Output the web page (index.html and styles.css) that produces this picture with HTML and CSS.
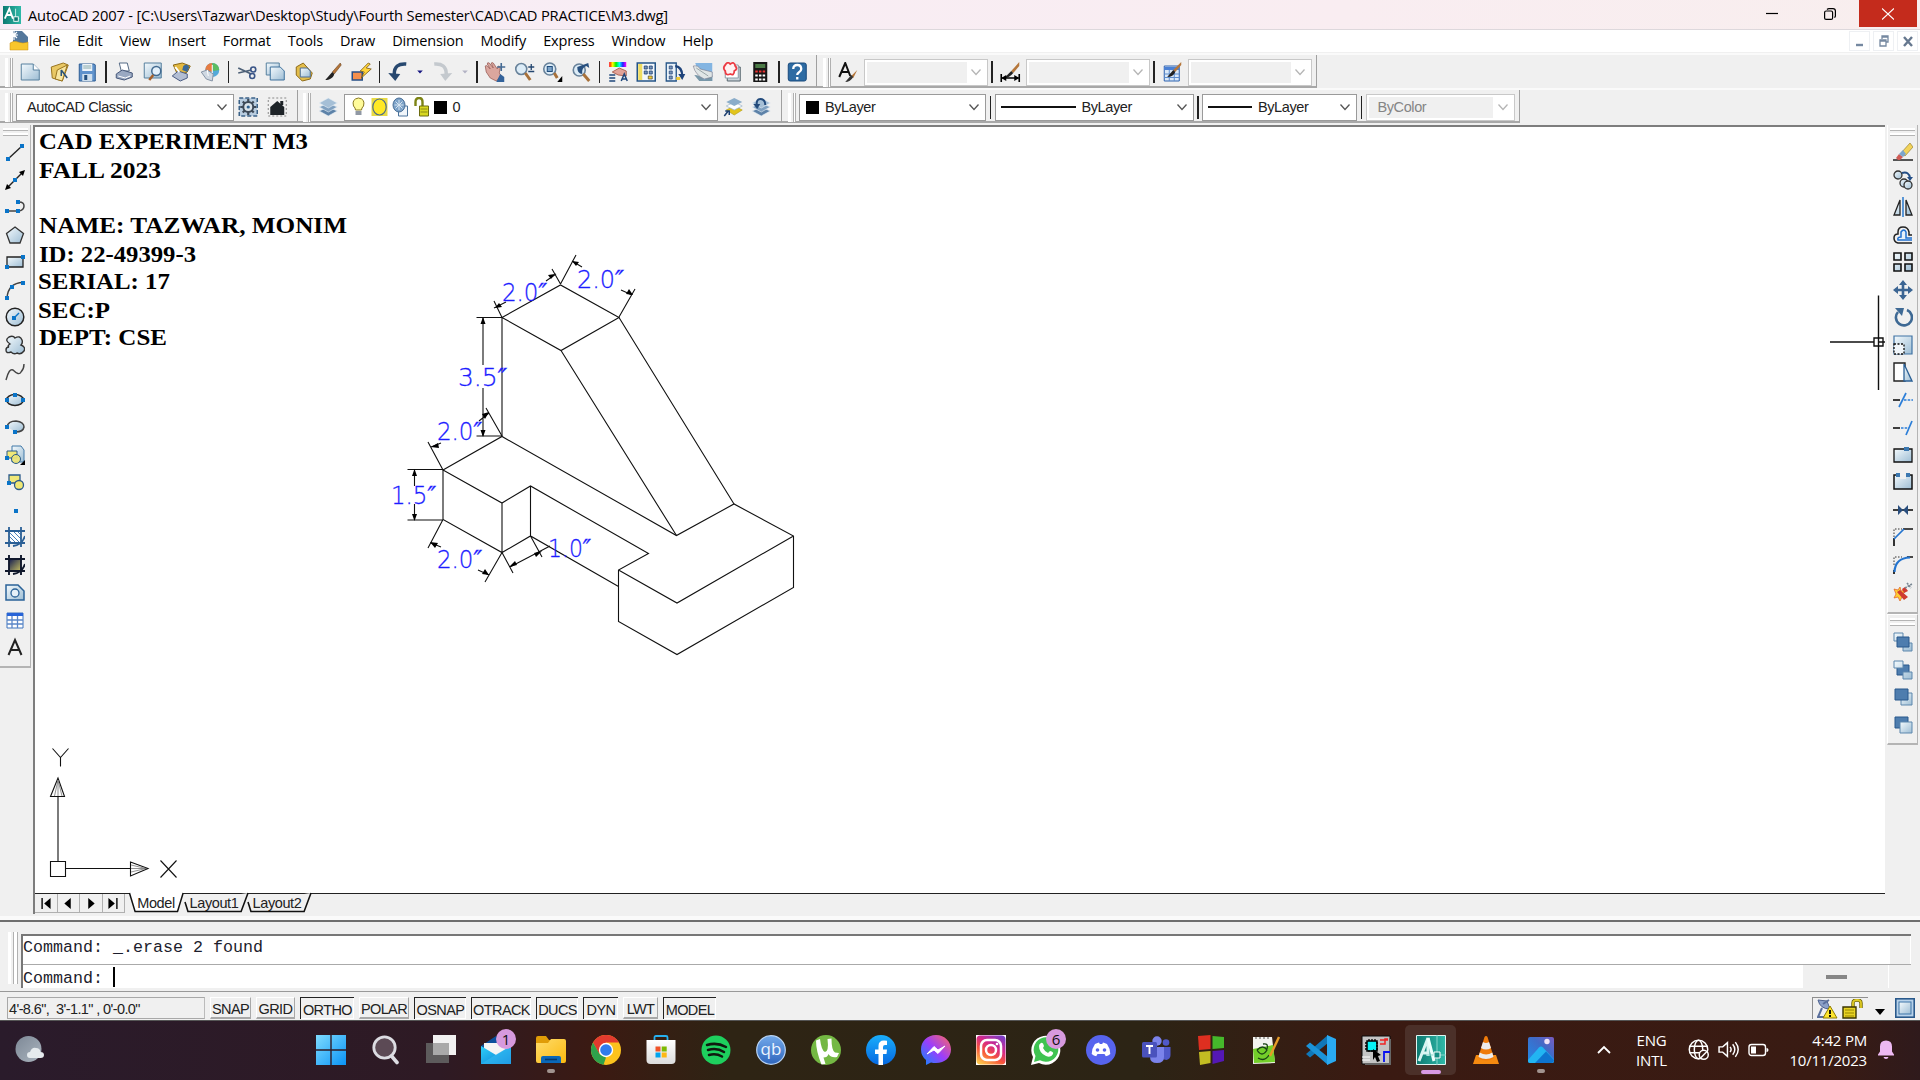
FILE: index.html
```html
<!DOCTYPE html>
<html lang="en">
<head>
<meta charset="utf-8">
<title>AutoCAD 2007 - M3.dwg</title>
<link rel="stylesheet" href="styles.css">
</head>
<body>
<svg class="defs" width="0" height="0">
  <defs>
    <linearGradient id="paper" x1="0" y1="0" x2="1" y2="1"><stop offset="0" stop-color="#f4fafd"/><stop offset="1" stop-color="#9dbdd4"/></linearGradient>
    <linearGradient id="moon" x1="0" y1="0" x2="1" y2="1"><stop offset="0" stop-color="#7d8896"/><stop offset="1" stop-color="#aab4be"/></linearGradient>
    <linearGradient id="rainbow"><stop offset="0" stop-color="#f00"/><stop offset=".2" stop-color="#ff0"/><stop offset=".4" stop-color="#0e0"/><stop offset=".6" stop-color="#0ff"/><stop offset=".8" stop-color="#22f"/><stop offset="1" stop-color="#f0f"/></linearGradient>
    <linearGradient id="dusk" x1="0" y1="0" x2="1" y2="1"><stop offset="0" stop-color="#111a50"/><stop offset="1" stop-color="#c8c060"/></linearGradient>
    <linearGradient id="win" x1="0" y1="0" x2="1" y2="1"><stop offset="0" stop-color="#7fdcff"/><stop offset="1" stop-color="#0a93f5"/></linearGradient>
    <linearGradient id="folder" x1="0" y1="0" x2="1" y2="1"><stop offset="0" stop-color="#ffdc6b"/><stop offset="1" stop-color="#fbb90f"/></linearGradient>
    <linearGradient id="fb" x1="0" y1="0" x2="0" y2="1"><stop offset="0" stop-color="#1aaefb"/><stop offset="1" stop-color="#0568e1"/></linearGradient>
    <linearGradient id="msg" x1="0" y1="1" x2="1" y2="0"><stop offset="0" stop-color="#0a8cff"/><stop offset=".5" stop-color="#9c3dfb"/><stop offset="1" stop-color="#ff6a60"/></linearGradient>
    <linearGradient id="insta" x1=".2" y1="1" x2=".8" y2="0"><stop offset="0" stop-color="#fdc54c"/><stop offset=".35" stop-color="#f7553a"/><stop offset=".65" stop-color="#d3288c"/><stop offset="1" stop-color="#7d3cc4"/></linearGradient>
    <linearGradient id="mail" x1="0" y1="0" x2="1" y2="1"><stop offset="0" stop-color="#2fd0f8"/><stop offset="1" stop-color="#0a7bd6"/></linearGradient>
    <linearGradient id="photo" x1="0" y1="1" x2="1" y2="0"><stop offset="0" stop-color="#1f8be8"/><stop offset=".6" stop-color="#3f6bc8"/><stop offset="1" stop-color="#7a5cc0"/></linearGradient>
    <linearGradient id="teal" x1="0" y1="0" x2="1" y2="0"><stop offset="0" stop-color="#0d7a72"/><stop offset="1" stop-color="#2fb9a8"/></linearGradient>
    <linearGradient id="qb" x1="0" y1="0" x2="0" y2="1"><stop offset="0" stop-color="#72a9ea"/><stop offset="1" stop-color="#2f66bd"/></linearGradient>
    <linearGradient id="store" x1="0" y1="0" x2="0" y2="1"><stop offset="0" stop-color="#fff"/><stop offset="1" stop-color="#dcdcdc"/></linearGradient>
    <symbol id="chev" viewBox="0 0 12 12"><path d="M1.500 3.500 6 8.500l4.500-5" fill="none" stroke="currentColor" stroke-width="1.300"/></symbol>
    <symbol id="brush" viewBox="0 0 20 20"><path d="M18 1 10 10l2 2 7-9z" fill="#b5763a" stroke="#5a3210" stroke-width=".5"/><path d="M10 10 3 18c4 0 8-2 9-6z" fill="#222"/></symbol>
    <symbol id="layers" viewBox="0 0 20 20"><path d="M10 10 19 14l-9 5-9-5z" fill="#5d82a8" stroke="#e8f0f6" stroke-width=".6"/><path d="m10 6 9 4-9 5-9-5z" fill="#7fa0c0" stroke="#e8f0f6" stroke-width=".6"/><path d="m10 1 9 5-9 5-9-5z" fill="#a5bfd6" stroke="#e8f0f6" stroke-width=".6"/></symbol>
  </defs>
</svg>

<header class="titlebar">
  <svg class="app-icon" viewBox="0 0 20 20"><rect width="20" height="20" fill="url(#teal)"/><path d="M2 14 7 3l4 11M4 10h5" fill="none" stroke="#fff" stroke-width="2"/><path d="M11 14h7M14 3v14" stroke="#d5f3ee"/><rect x="12" y="12" width="5" height="5" fill="#0d7a72" stroke="#fff"/></svg>
  <span class="title-text">AutoCAD 2007 - [C:\Users\Tazwar\Desktop\Study\Fourth Semester\CAD\CAD PRACTICE\M3.dwg]</span>
  <div class="window-buttons">
    <span class="wbtn"><svg width="12" height="12" viewBox="0 0 12 12"><path d="M0 5.500h12" stroke="#000" stroke-width="1.200"/></svg></span>
    <span class="wbtn"><svg width="12" height="12" viewBox="0 0 12 12" fill="none" stroke="#000" stroke-width="1.200"><rect x=".6" y="3" width="8" height="8.400" rx="1.500"/><path d="M3 1.500Q4 .6 5 .6h4q2.400 0 2.400 2.400v5q0 1-1 1.600"/></svg></span>
    <span class="wbtn close"><svg width="12" height="12" viewBox="0 0 12 12"><path d="m0 .5 12 11M12 .5 0 11.500" stroke="#fff" stroke-width="1.100"/></svg></span>
  </div>
</header>

<nav class="menubar">
  <svg class="doc-icon" viewBox="0 0 20 20"><path d="M4 0h9l6 6v6H4z" fill="#54789c"/><path d="M5 0v9M1 4h8M2 1l6 6M8 1 2 7" stroke="#fff" stroke-width="1.100"/><path d="M1 12q4-3 8-1 5 2 10 0v8H1z" fill="#f8c62c" stroke="#c88f10" stroke-width=".5"/></svg>
  <span>File</span><span>Edit</span><span>View</span><span>Insert</span><span>Format</span><span>Tools</span><span>Draw</span><span>Dimension</span><span>Modify</span><span>Express</span><span>Window</span><span>Help</span>
  <div class="doc-buttons">
    <b><svg width="10" height="12" viewBox="0 0 10 12"><path d="M1 10h7" stroke="#7588a0" stroke-width="2.400"/></svg></b>
    <b><svg width="10" height="12" viewBox="0 0 10 12" fill="none" stroke="#7588a0" stroke-width="1.300"><path d="M3 4V1h6v6H7M3 2h6"/><path d="M1 5h6v6H1zM1 6h6"/></svg></b>
    <b><svg width="10" height="12" viewBox="0 0 10 12"><path d="m1 2 8 9M9 2l-8 9" stroke="#66788f" stroke-width="2.400"/></svg></b>
  </div>
</nav>

<section class="toolrow first">
  <div class="toolbar tb-standard">
    <i class="grip"></i>
    <svg class="ic" viewBox="0 0 20 20"><path d="M1 2h12l6 6v10H1z" fill="url(#paper)" stroke="#57809f"/><path d="M13 2v6h6" fill="#fff" stroke="#57809f"/></svg>
    <svg class="ic" viewBox="0 0 20 20"><path d="M2 5 14 1l5 2-6 16-10-3z" fill="#e9c864" stroke="#997520"/><path d="m6 17 2-9 10-5-5 16z" fill="#f8e6a0" stroke="#997520"/><path d="m12 8 6 8M12 8v6" stroke="#27527c" stroke-width="1.500"/></svg>
    <svg class="ic" viewBox="0 0 20 20"><path d="M2 2h15l1 1v16H2z" fill="#5f92cc" stroke="#2c5c94"/><path d="M5 2h10v7H5z" fill="#eef4fa"/><path d="M6 4h8M6 6h8" stroke="#8aa"/><path d="M5 12h10v7H5z" fill="#cfdfed"/><path d="M7 13h3v5H7z" fill="#24507f"/></svg>
    <i class="sep"></i>
    <svg class="ic" viewBox="0 0 20 20"><path d="M5 1h8l2 8H7z" fill="#fff" stroke="#556a85"/><path d="m2 12 6-4 10 3v4l-8 3-8-2z" fill="#9aa9c2" stroke="#47587a"/><path d="m4 14 7 2 5-2" stroke="#fff" fill="none"/></svg>
    <svg class="ic" viewBox="0 0 20 20"><path d="M1 1h17v15H1z" fill="url(#paper)" stroke="#57809f"/><circle cx="13" cy="9" r="4.500" fill="#e4f1fb" stroke="#426a90" stroke-width="1.500"/><path d="m10 13-4 5" stroke="#a5602c" stroke-width="2.500"/></svg>
    <svg class="ic" viewBox="0 0 20 20"><path d="m2 3 9-2 8 3-3 6-9 4z" fill="#e3b941" stroke="#8c6914"/><path d="M12 4q4-3 6 1l-2 5-5-2z" fill="#386899"/><path d="m1 14 6-5 9 3v4l-7 3z" fill="#b3bed3" stroke="#4b5c82"/><path d="m4 5 4 5" stroke="#fff" stroke-width="2"/></svg>
    <svg class="ic" viewBox="0 0 20 20"><circle cx="12" cy="8" r="7" fill="#54a9d9"/><path d="M12 1a7 7 0 0 0-7 7l7 2z" fill="#e77c41"/><path d="M12 1a7 7 0 0 1 7 7l-6 1z" fill="#5bbd62"/><path d="m1 10 6-2 6 4-1 7-6-2z" fill="#cfd8e2" stroke="#8694a6"/><path d="m7 8 1 6M12 3v8" stroke="#fff"/></svg>
    <i class="sep"></i>
    <svg class="ic" viewBox="0 0 20 20"><path d="m1 6 13 6M1 11l13-3" stroke="#4d6077" stroke-width="1.700"/><circle cx="16" cy="7.500" r="2.500" fill="none" stroke="#3b5688" stroke-width="1.600"/><circle cx="15" cy="14" r="2.500" fill="none" stroke="#3b5688" stroke-width="1.600"/></svg>
    <svg class="ic" viewBox="0 0 20 20"><path d="M1 1h13v12H1z" fill="url(#paper)" stroke="#57809f"/><path d="M5 5h10l4 4v9H5z" fill="url(#paper)" stroke="#3e719c"/></svg>
    <svg class="ic" viewBox="0 0 20 20"><path d="m2 5 7-4 9 10-2 6-8 2-6-6z" fill="#e3bd4a" stroke="#8e6b18"/><path d="M6 6h7l3 3v6H6z" fill="url(#paper)" stroke="#4a6d98"/></svg>
    <svg class="ic" viewBox="0 0 20 20"><use href="#brush"/></svg>
    <svg class="ic" viewBox="0 0 20 20"><rect x="1" y="10" width="10" height="8" fill="#f48f4d" stroke="#264f87" stroke-width="1.500"/><path d="m17 1-8 8 4 1-3 6 10-9-5-1 4-4z" fill="#ffd43a" stroke="#775712" stroke-width=".8"/></svg>
    <i class="sep"></i>
    <svg class="ic" viewBox="0 0 20 20"><path d="M18 2Q6 1 6 12" fill="none" stroke="#27486f" stroke-width="3.500"/><path d="m0 11 12 1-5 7z" fill="#27486f"/></svg>
    <svg class="ic drop" viewBox="0 0 10 20"><path d="M1 8h8l-4 4z" fill="#141480"/></svg>
    <svg class="ic" viewBox="0 0 20 20"><path d="M2 2q12-1 12 10" fill="none" stroke="#c4c9ce" stroke-width="3.500"/><path d="m20 11-12 1 5 7z" fill="#c4c9ce"/></svg>
    <svg class="ic drop" viewBox="0 0 10 20"><path d="M1 8h8l-4 4z" fill="#b2b2c4"/></svg>
    <i class="sep"></i>
    <svg class="ic" viewBox="0 0 20 20"><path d="M0 4q1-1 2 0l3 3-3-5q0-2 2-1l4 5-2-5q1-1 2 0l4 6 1-3q2 0 2 2l-1 5 2 3-5 5-6-3-4-6z" fill="#dba69e" stroke="#9a5e58" stroke-width=".8"/><path d="m15 12 4 3v5h-8z" fill="#33639b"/><path d="M12 5h8M16 1v8" stroke="#456b94" stroke-width="1.600"/></svg>
    <svg class="ic" viewBox="0 0 20 20"><circle cx="7" cy="7" r="5.500" fill="#dcecf7" stroke="#68829a" stroke-width="1.600"/><path d="m11 11 5 7" stroke="#a8713a" stroke-width="3"/><path d="M14 5h6M17 2v6M14 9.500h6" stroke="#23466f" stroke-width="1.300"/></svg>
    <svg class="ic" viewBox="0 0 20 20"><circle cx="7.500" cy="7" r="6" fill="#dcecf7" stroke="#68829a" stroke-width="1.600"/><rect x="5" y="4.500" width="5" height="5" fill="#7ba3c8" stroke="#214d7d"/><path d="m12 11 3 5" stroke="#a8713a" stroke-width="3"/><path d="M20 14v6h-5z"/></svg>
    <svg class="ic" viewBox="0 0 20 20"><circle cx="8" cy="8" r="6" fill="#dcecf7" stroke="#68829a" stroke-width="1.600"/><path d="m12 12 6 7" stroke="#a8713a" stroke-width="3"/><path d="m6 5 11-4 1 5-3-2q-5 2-4 8Q6 12 6 5z" fill="#28507f"/></svg>
    <i class="sep"></i>
    <svg class="ic" viewBox="0 0 20 20"><path d="M1 0h17v5H1z" fill="url(#rainbow)"/><path d="m4 10 7-4 7 3v5l-8-1z" fill="#e2a398" stroke="#9a4e3e" stroke-width=".8"/><path d="M1 13h6M1 16h6M1 19h6M13 19l3-7 3 7M14 17h4" stroke="#1f477b" stroke-width="1.500" fill="none"/></svg>
    <svg class="ic" viewBox="0 0 20 20"><path d="M1 1h18v18H1z" fill="#f4f8fc" stroke="#245487" stroke-width="1.500"/><path d="M2 2h4v16H2z" fill="#f0dd61"/><path d="M8 4h3v3H8zM13 4h3v3h-3zM8 9h3v3H8zM13 9h3v3h-3z" fill="#7896bb" stroke="#1f3f72" stroke-width=".8"/><path d="M12 14h4v3h-4z" fill="#f2cb32" stroke="#333" stroke-width=".6"/></svg>
    <svg class="ic" viewBox="0 0 20 20"><path d="M1 1h10v18H1z" fill="#e8f1f8" stroke="#245487" stroke-width="1.300"/><path d="M4 4h3v3H4zM4 9h3v3H4zM4 14h3v3H4z" fill="#7896bb" stroke="#1f3f72" stroke-width=".7"/><path d="M10 4q7 1 7 10" fill="none" stroke="#1d437a" stroke-width="2.400"/><path d="M13 12h7l-3 6z" fill="#1d437a"/><path d="M11 15h4v3h-4z" fill="#f2cb32"/></svg>
    <svg class="ic" viewBox="0 0 20 20"><path d="M2 1h17v18H8z" fill="#83b5e2"/><path d="M1 13q6 0 10 5l8-5v6H6z" fill="#7897a8"/><path d="M0 4q5-1 7 3l12 3v5l-8 2Q2 13 0 4z" fill="#e0e6e6" stroke="#778" stroke-width=".6"/><path d="m3 6 12 8" stroke="#9aa6a8"/></svg>
    <svg class="ic" viewBox="0 0 20 20"><path d="M5 5h13v14H5z" fill="#cad4da" stroke="#57656e"/><path d="M3 3h13v13H3z" fill="#fff" stroke="#8b9ba5"/><path d="M3 3q2-4 5-1 4-3 5 2 3 3-1 5 0 5-4 3-5 2-5-3-3-3 0-6z" fill="#fff2f2" stroke="#ec3b43" stroke-width="1.800"/></svg>
    <svg class="ic" viewBox="0 0 20 20"><path d="M3 0h14v20H3z" fill="#171717"/><path d="M5 2h10v4H5z" fill="#4b7a46"/><path d="M5 9.500h10" stroke="#e33" stroke-width="2" stroke-dasharray="2.500 1.200"/><path d="M5 13.500h10M5 17.500h10" stroke="#fff" stroke-width="2" stroke-dasharray="2.500 1.200"/></svg>
    <i class="sep"></i>
    <svg class="ic" viewBox="0 0 20 20"><rect x="1" y="1" width="18" height="18" rx="2" fill="#2d6ba3" stroke="#194a7d"/><path d="M6 7q0-4 4-4t4 4q0 2-2.500 3.500Q10 11.500 10 13M10 15v2.500" fill="none" stroke="#fff" stroke-width="2.300"/></svg>
  </div>
  <div class="toolbar tb-styles">
    <i class="grip"></i>
    <svg class="ic" viewBox="0 0 20 20"><path d="M1 15 7 1l5 13M3 10h7" fill="none" stroke="#111" stroke-width="2"/><path d="m19 8-6 6 2 2z" fill="#b5763a"/><path d="m13 13 2 2q-3 5-8 5z" fill="#333"/></svg>
    <span class="combo off w124"><em></em><svg><use href="#chev"/></svg></span>
    <i class="sep"></i>
    <svg class="ic" viewBox="0 0 20 20"><path d="m19 0-8 9 2 2 6-7z" fill="#b5763a"/><path d="m11 9 2 2q-4 5-9 5z" fill="#222"/><path d="M1 12v8M19 12v8M2 16h16" stroke="#000" stroke-width="1.600"/><path d="m1 16 5-3v6zM19 16l-5-3v6z"/></svg>
    <span class="combo off w124"><em></em><svg><use href="#chev"/></svg></span>
    <i class="sep"></i>
    <svg class="ic" viewBox="0 0 20 20"><path d="M2 4h15v15H2z" fill="#dbe9f8" stroke="#2c62b0"/><path d="M2 5h15v3H2z" fill="#4a80d4"/><path d="M2 12h15M2 15.500h15M7 8v11M12 8v11" stroke="#5d8ccc"/><path d="m19 0-8 8 2 2 6-7z" fill="#b5763a"/><path d="m11 8 2 2q-2 5-8 5z" fill="#222"/></svg>
    <span class="combo off w124"><em></em><svg><use href="#chev"/></svg></span>
  </div>
</section>

<section class="toolrow">
  <div class="toolbar tb-workspace">
    <i class="grip"></i>
    <span class="combo w218">AutoCAD Classic<svg><use href="#chev"/></svg></span>
    <svg class="ic" viewBox="0 0 20 20"><path d="M1 1h18v18H1z" fill="#b9cde0" stroke="#3b6288" stroke-width="1.500" stroke-dasharray="4 2"/><circle cx="10" cy="10" r="5" fill="#dce4ea" stroke="#3e4a58" stroke-width="2"/><path d="M10 2v3M10 15v3M2 10h3M15 10h3M4.500 4.500l2 2M13.500 13.500l2 2M15.500 4.500l-2 2M6.500 13.500l-2 2" stroke="#3e4a58" stroke-width="2.200"/><circle cx="10" cy="10" r="1.600" fill="#2e6090"/></svg>
    <svg class="ic" viewBox="0 0 20 20"><path d="M1 1h18v18H1z" fill="none" stroke="#888" stroke-dasharray="2 2"/><path d="M10 4 3 10v8h14v-8z" fill="#1e2428"/><path d="M13 4h3v4h-3z" fill="#1e2428"/></svg>
  </div>
  <div class="toolbar tb-layers">
    <i class="grip"></i>
    <svg class="ic" viewBox="0 0 20 20"><use href="#layers"/></svg>
    <span class="combo layer-combo">
      <svg class="li" viewBox="0 0 16 20"><path d="M5 13q0-2-2-4Q1 2 8 1q7 1 5 8-2 2-2 4z" fill="#fffb9a" stroke="#8a7a20"/><path d="M5 14h6v4H5z" fill="#9098a4"/></svg>
      <svg class="li" viewBox="0 0 16 20"><path d="M0 1h16v18H0z" fill="#e8da45"/><ellipse cx="8" cy="10" rx="6.700" ry="8" fill="#ffe925" stroke="#4c6c8c" stroke-width="1.200"/></svg>
      <svg class="li" viewBox="0 0 16 20"><path d="M6 9h9v10H6z" fill="#f1f6fb" stroke="#4b739b"/><ellipse cx="6.500" cy="8" rx="6" ry="7" fill="#7ba1c7" stroke="#4a6f97"/><path d="M6.500 3v10M2 8h9M3 4.500l7 7M10 4.500l-7 7" stroke="#d7e5f1"/></svg>
      <svg class="li" viewBox="0 0 16 20"><path d="M2 9V5q0-4 3.500-4T9 5v6" fill="none" stroke="#7d8415" stroke-width="2.400"/><path d="M6 9h9v10H6z" fill="#d8d820" stroke="#6d6c10"/><path d="M7 12h7M7 15h7" stroke="#8c8b14"/></svg>
      <i class="swatch"></i>0<svg><use href="#chev"/></svg>
    </span>
    <svg class="ic" viewBox="0 0 20 20"><path d="m11 9 8 4-8 5-8-5z" fill="#e2c41c" stroke="#b09a10" stroke-width=".6"/><path d="m11 5 8 4-8 4-8-4z" fill="#fff" stroke="#9bb5c8" stroke-width=".7"/><path d="m11 1 8 4-8 4-8-4z" fill="#8badca"/><path d="m1 19 4-5M2 14h4v4" fill="none" stroke="#1b3e70" stroke-width="1.500"/></svg>
    <svg class="ic" viewBox="0 0 20 20"><use href="#layers"/><path d="M14 8q0-6-5-6Q5 2 5.500 8" fill="none" stroke="#234b7c" stroke-width="2"/><path d="M2 7h7l-3 5z" fill="#234b7c"/></svg>
  </div>
  <div class="toolbar tb-props">
    <i class="grip"></i>
    <span class="combo w187"><i class="swatch"></i>ByLayer<svg><use href="#chev"/></svg></span>
    <i class="sep thin"></i>
    <span class="combo w199"><i class="rule long"></i>ByLayer<svg><use href="#chev"/></svg></span>
    <i class="sep thin"></i>
    <span class="combo w155"><i class="rule"></i>ByLayer<svg><use href="#chev"/></svg></span>
    <i class="sep thin"></i>
    <span class="combo off w149"><em>ByColor</em><svg><use href="#chev"/></svg></span>
  </div>
</section>

<main class="workspace">
  <aside class="side left">
    <div class="toolcol">
      <i class="hgrip"></i>
      <svg viewBox="0 0 20 20"><path d="M3 17 17 4" stroke="#222" stroke-width="1.400"/><path d="M1 15h4v4H1zM15 2h4v4h-4z" fill="#0a74c8"/></svg>
      <svg viewBox="0 0 20 20"><path d="M2 18 18 2" stroke="#222" stroke-width="1.400"/><path d="m0 20 2-6 4 4zM20 0l-6 2 4 4z"/><path d="M8 8h4v4H8z" fill="#0a74c8"/></svg>
      <svg viewBox="0 0 20 20"><path d="M2 14h12q5-1 5-5t-5-4" fill="none" stroke="#444" stroke-width="1.500"/><path d="M0 12h4v4H0zM11 12h4v4h-4zM11 3h4v4h-4z" fill="#0a74c8"/></svg>
      <svg viewBox="0 0 20 20"><path d="m10 2 8.500 6.500L15 18H5L1.500 8.500z" fill="url(#paper)" stroke="#333" stroke-width="1.300"/></svg>
      <svg viewBox="0 0 20 20"><path d="M2 5h16v10H2z" fill="url(#paper)" stroke="#222" stroke-width="1.300"/><path d="M0 13h4v4H0zM16 3h4v4h-4z" fill="#0a74c8"/></svg>
      <svg viewBox="0 0 20 20"><path d="M2 18Q3 3 18 2.500" fill="none" stroke="#444" stroke-width="1.500"/><path d="M0 16h4v4H0zM5 5h4v4H5zM16 1h4v4h-4z" fill="#0a74c8"/></svg>
      <svg viewBox="0 0 20 20"><circle cx="10" cy="10" r="8.800" fill="url(#paper)" stroke="#222" stroke-width="1.500"/><path d="m9 11 5-5" stroke="#0a74c8" stroke-width="1.500"/><path d="M7 9h4v4H7z" fill="#0a74c8"/></svg>
      <svg viewBox="0 0 20 20"><path d="M5 9Q-1 5 4 2q4-2 6 1 5-3 7 2 1 3-1 5 5 2 3 6-3 4-7 2-3 2-6-1-5 2-5-2 0-3 3-3-2-1 1-3z" fill="url(#paper)" stroke="#333" stroke-width="1.400"/></svg>
      <svg viewBox="0 0 20 20"><path d="M1 18Q4 6 8 8q6 6 8 2 3-3 3-8" fill="none" stroke="#444" stroke-width="1.400"/></svg>
      <svg viewBox="0 0 20 20"><ellipse cx="10" cy="10" rx="8.500" ry="5.500" fill="url(#paper)" stroke="#222" stroke-width="1.500"/><path d="M0 8h4v4H0zM16 8h4v4h-4zM8 3h4v4H8z" fill="#0a74c8"/></svg>
      <svg viewBox="0 0 20 20"><path d="M2 10q1-6 9-6 8 1 8 6-1 5-8 5" fill="url(#paper)" stroke="#444" stroke-width="1.500"/><path d="M0 8h4v4H0zM8 13h4v4H8z" fill="#0a74c8"/></svg>
      <svg viewBox="0 0 20 20"><path d="M7 1h9l3 4v12H7z" fill="url(#paper)" stroke="#4178a8"/><path d="M2 6h10v7H2z" fill="#f0e878" stroke="#2a5a8a"/><circle cx="11" cy="14" r="4.500" fill="#efe774" fill-opacity=".9" stroke="#2a5a8a"/><path d="M20 15v5h-5z"/><path d="M0 11h4v4H0z" fill="#0a74c8"/></svg>
      <svg viewBox="0 0 20 20"><path d="M4 3h11v8H4z" fill="#f0e878" stroke="#2a5a8a" stroke-width="1.300"/><circle cx="14" cy="13" r="4.500" fill="#efe774" stroke="#2a5a8a" stroke-width="1.300"/><path d="M2 9h4v4H2z" fill="#0a74c8"/></svg>
      <svg viewBox="0 0 20 20"><path d="M9 9h4v4H9z" fill="#0a74c8"/></svg>
      <svg viewBox="0 0 20 20"><path d="M4 4h12v12H4z" fill="#fff"/><path d="m4 5 11 11M4 9l7 7M8 4l8 8M12 4l4 4M4 13l3 3" stroke="#4a7fb8"/><path d="M4 0v20M16 0v20M0 4h20M0 16h20M20 9q-3 9-12 10" fill="none" stroke="#2a5f96" stroke-width="1.800"/></svg>
      <svg viewBox="0 0 20 20"><path d="M4 4h12v12H4z" fill="url(#dusk)"/><path d="M4 0v20M16 0v20M0 4h20M0 16h20M20 9q-3 9-12 10" fill="none" stroke="#10182c" stroke-width="1.900"/></svg>
      <svg viewBox="0 0 20 20"><path d="M1 3h12l6 6v9H1z" fill="url(#paper)" stroke="#2a6298" stroke-width="1.500"/><circle cx="10" cy="11" r="4" fill="#e5f0f8" stroke="#2a6298" stroke-width="1.300"/></svg>
      <svg viewBox="0 0 20 20"><path d="M2 3h16v15H2z" fill="#fff" stroke="#3f74be"/><path d="M2 3h16v3H2z" fill="#2864d8"/><path d="M2 10h16M2 14h16M7 6v12M12.500 6v12" stroke="#5a86c8" stroke-width="1.300"/></svg>
      <svg viewBox="0 0 20 20"><path d="M3.500 18 10 3l6.500 15M6 13h8" fill="none" stroke="#222" stroke-width="2"/></svg>
    </div>
  </aside>

  <section class="viewport">
    <svg class="drawing" viewBox="35 127 1850 766">
      <g class="notes">
        <text x="39" y="148.500" textLength="269" lengthAdjust="spacingAndGlyphs">CAD EXPERIMENT M3</text>
        <text x="39" y="177.500" textLength="122" lengthAdjust="spacingAndGlyphs">FALL 2023</text>
        <text x="39" y="232.500" textLength="308" lengthAdjust="spacingAndGlyphs">NAME: TAZWAR, MONIM</text>
        <text x="39" y="261.500" textLength="157" lengthAdjust="spacingAndGlyphs">ID: 22-49399-3</text>
        <text x="38" y="289" textLength="132" lengthAdjust="spacingAndGlyphs">SERIAL: 17</text>
        <text x="38" y="317.500" textLength="72" lengthAdjust="spacingAndGlyphs">SEC:P</text>
        <text x="39" y="345" textLength="128" lengthAdjust="spacingAndGlyphs">DEPT: CSE</text>
      </g>
      <g class="solid">
        <path d="M502 317.500 560.500 285 619 317.500 561 350.500zM502 317.500V436.500M561 350.500 676.500 535.500M619 317.500 734 504"/>
        <path d="M443 470 502 436.500 676.500 535.500 734 504 793.500 536V587.500L677 654.500 618.500 621.500V570L648.500 553.500 530.500 486 502 503zM443 470V519.500L502 552.500 530.500 536 618.500 586.500M502 503V552.500M530.500 486V536M618.500 570 677 603 793.500 536"/>
      </g>
      <g class="dims">
        <path d="M494 301 502 317.500M552 269 560.500 284M494 308 506 302M546 281 556 274M576 255 560.500 284M635 289 619 317M572 261 582 267M621 290 632 295"/>
        <path d="M476.500 317.500H502M476.500 436H502M483 318V365M483 388V436M486 408 502 436M489 413 479 421M428 442 443 470M431 447 441 443"/>
        <path d="M407.500 469.500H443M407.500 520H443M414.500 470V486M414.500 504V520M443 519.500 428 548M431 543 441 547M502 552.500 485 582M478 570 489 575M502 552.500 513 573M530.500 536 542 557M510 567 550 546"/>
        <path class="arrow" d="m483 317-2.500 7h5zM483 437l-2.500-7h5zM414.500 469l-2.500 7h5zM414.500 521l-2.500-7h5zM495 308l4-5 3 4zM555 274l-7 1 3 4zM572 261l7 1-3 4zM633 295l-4-6-3 5zM489 412l-7 2 3 5zM431 447l7-4 1 5zM430 542l8 1-3 5zM489 575l-4-6-3 5zM509 567l6-6 2 4zM542 551l-8 2 2 4z"/>
      </g>
      <g class="values">
        <text x="502" y="300.500" textLength="45" lengthAdjust="spacingAndGlyphs">2.0<tspan>″</tspan></text>
        <text x="577" y="287.500" textLength="47" lengthAdjust="spacingAndGlyphs">2.0<tspan>″</tspan></text>
        <text x="458" y="385.500" textLength="49" lengthAdjust="spacingAndGlyphs">3.5<tspan>″</tspan></text>
        <text x="437" y="440" textLength="45" lengthAdjust="spacingAndGlyphs">2.0<tspan>″</tspan></text>
        <text x="391" y="504" textLength="45" lengthAdjust="spacingAndGlyphs">1.5<tspan>″</tspan></text>
        <text x="437" y="567.500" textLength="45" lengthAdjust="spacingAndGlyphs">2.0<tspan>″</tspan></text>
        <text x="548" y="556.500" textLength="43" lengthAdjust="spacingAndGlyphs">1.0<tspan>″</tspan></text>
      </g>
      <g class="ucs">
        <path d="M50.500 861.500h15v15h-15zM58 861V796M66 868.500H130M58 778l-7.500 18.500h14zM148 868.500l-17.500-6.500v14z"/>
        <path class="hatch" d="M58 780 54.500 796M58 780v16M58 780l4 16M146 868.500 131 865M146 868.500H131M146 868.500 131 872"/>
        <path d="m52.500 748.500 8 9 8-9M60.500 757.500v9M160.500 860.500l16 17M176.500 860.500l-16 17"/>
      </g>
      <g class="cursor"><path d="M1830 342H1873.500M1878.500 295.500V390M1874 338h9v8h-9zM1878 342h7"/></g>
    </svg>
    <div class="tabs">
      <span class="nav"><svg viewBox="0 0 14 12"><path d="M2 0h1.500v12H2zM12 0v12L5 6z"/></svg></span>
      <span class="nav"><svg viewBox="0 0 14 12"><path d="M10 0v12L3 6z"/></svg></span>
      <span class="nav"><svg viewBox="0 0 14 12"><path d="M4 0v12l7-6z"/></svg></span>
      <span class="nav"><svg viewBox="0 0 14 12"><path d="M2 0v12l7-6zM10.500 0H12v12h-1.500z"/></svg></span>
      <span class="tab active"><svg viewBox="0 0 60 20" preserveAspectRatio="none"><path d="M.5 0 6.500 18.500H52L58 0"/></svg>Model</span>
      <span class="tab"><svg viewBox="0 0 64 20" preserveAspectRatio="none"><path d="M0 9 3 18.500H57L64 0"/></svg>Layout1</span>
      <span class="tab"><svg viewBox="0 0 64 20" preserveAspectRatio="none"><path d="M0 9 3 18.500H57L64 0"/></svg>Layout2</span>
    </div>
  </section>

  <aside class="side right">
    <div class="toolcol">
      <i class="hgrip"></i>
      <svg viewBox="0 0 20 20"><path d="M0 18h20" stroke="#111" stroke-width="1.400"/><path d="m17 1 3 4-8 9-4-3z" fill="#f2d35a" stroke="#8b7320" stroke-width=".6"/><path d="m6 12 4 3-3 3H5l-2-2z" fill="#cf5b55"/><path d="m6 12 4 3 3-3-3-4z" fill="#7ca5cc"/></svg>
      <svg viewBox="0 0 20 20"><circle cx="5" cy="5" r="4" fill="url(#paper)" stroke="#333" stroke-width="1.300"/><circle cx="11" cy="13" r="4" fill="url(#paper)" stroke="#333" stroke-width="1.300"/><circle cx="15" cy="15" r="4" fill="url(#paper)" stroke="#333" stroke-width="1.300"/><path d="M9 3q7-2 8 5" fill="none" stroke="#234e86" stroke-width="2"/><path d="M14 7h6l-3 4z" fill="#234e86"/></svg>
      <svg viewBox="0 0 20 20"><path d="M7 3v15H1zM13 3v15h6z" fill="url(#paper)" stroke="#222" stroke-width="1.300"/><path d="M10 0v20" stroke="#3480d0" stroke-width="1.600"/></svg>
      <svg viewBox="0 0 20 20"><path d="M19 10h-3V7q-1-5-6-5T5 7v2q-4 0-4 4t4 5h14" fill="none" stroke="#222" stroke-width="1.500"/><path d="M19 13h-6V7q-2-4-5 0v5q-4 0-3 3h14" fill="#e6f0fa" stroke="#2070d0" stroke-width="1.500"/></svg>
      <svg viewBox="0 0 20 20"><path d="M1 1h7v7H1zM12 1h7v7h-7zM1 12h7v7H1zM12 12h7v7h-7z" fill="url(#paper)" stroke="#111" stroke-width="1.600"/></svg>
      <svg viewBox="0 0 20 20"><path d="M10 2v16M2 10h16" stroke="#3b6593" stroke-width="2.600"/><path d="m10 0 4 5H6zM10 20l4-5H6zM0 10l5-4v8zM20 10l-5-4v8z" fill="#3b6593"/></svg>
      <svg viewBox="0 0 20 20"><path d="M14 3a8 8 0 1 1-9 2" fill="none" stroke="#3e6994" stroke-width="2.600"/><path d="M2 1h9l-2 8z" fill="#3e6994"/></svg>
      <svg viewBox="0 0 20 20"><path d="M1 1h18v18H1z" fill="url(#paper)" stroke="#3f72a4" stroke-width="1.200"/><path d="M1 9h10v10H1z" fill="#f1f6fa" stroke="#111" stroke-dasharray="2 1.500" stroke-width="1.300"/></svg>
      <svg viewBox="0 0 20 20"><path d="M1 1h11v18H1z" fill="#fff" stroke="#222" stroke-width="1.400"/><path d="m11 2 8 17h-8z" fill="url(#paper)" stroke="#2b6096" stroke-width="1.300"/></svg>
      <svg viewBox="0 0 20 20"><path d="M0 10h7" stroke="#111" stroke-width="1.600"/><path d="M13 3 6 17" stroke="#2b7ed8" stroke-width="1.700"/><path d="M11 10h9" stroke="#2b7ed8" stroke-dasharray="2.500 1.200" stroke-width="1.500"/></svg>
      <svg viewBox="0 0 20 20"><path d="M0 11h7" stroke="#111" stroke-width="1.600"/><path d="M19 4l-6 14" stroke="#2b7ed8" stroke-width="1.700"/><path d="M8 11h8" stroke="#2b7ed8" stroke-dasharray="2.500 1.200" stroke-width="1.500"/></svg>
      <svg viewBox="0 0 20 20"><path d="M1 4h18v13H1z" fill="url(#paper)" stroke="#111" stroke-width="1.300"/><path d="M11 2h5v4h-5z" fill="#3c78b0"/></svg>
      <svg viewBox="0 0 20 20"><path d="M5 3H1v14h18V3h-4" fill="url(#paper)" stroke="#111" stroke-width="1.500"/><path d="M7 2h6v5H7z" fill="#f0f0f0"/><path d="M3 1h4v4H3zM13 1h4v4h-4z" fill="#3c78b0"/></svg>
      <svg viewBox="0 0 20 20"><path d="M0 10h20" stroke="#111" stroke-width="1.600"/><path d="m5 5 5 5-5 5zM15 5l-5 5 5 5z" fill="#294e7e"/></svg>
      <svg viewBox="0 0 20 20"><path d="M1 19v-8M10 2h10" stroke="#111" stroke-width="1.700"/><path d="M1 10V2h8" fill="none" stroke="#333" stroke-dasharray="1.500 1.500"/><path d="m1 12 10-10" stroke="#2374cf" stroke-width="1.700"/></svg>
      <svg viewBox="0 0 20 20"><path d="M1 19v-4M14 2h6" stroke="#111" stroke-width="1.700"/><path d="M1 10V2h8" fill="none" stroke="#333" stroke-dasharray="1.500 1.500"/><path d="M1.500 17Q2 3 17 2.500" fill="none" stroke="#2374cf" stroke-width="2.200"/></svg>
      <svg viewBox="0 0 20 20"><path d="m1 7 4 1 2-3 1 4 5-1-3 4 3 4-4-1-2 4-2-4-4 1 2-4z" fill="#ffcf33" stroke="#e05a20" stroke-width=".7"/><path d="m4 10 3-2 8 7-4 3zM9 7l3-2 3 4-4 2z" fill="#cf3a31"/><path d="m12 6 7-4M14 1l4 5" stroke="#7a8894" stroke-width="1.600" stroke-dasharray="2 1"/></svg>
    </div>
    <div class="toolcol order">
      <i class="hgrip"></i>
      <svg viewBox="0 0 20 20"><path d="M1 1h9v8H1zM10 11h9v8h-9z" fill="url(#paper)" stroke="#5d87ad"/><path d="M4 5h12v10H4z" fill="#4e7dae" stroke="#28588c"/></svg>
      <svg viewBox="0 0 20 20"><path d="M4 5h12v10H4z" fill="#4e7dae" stroke="#28588c"/><path d="M1 1h9v7H1zM10 12h9v7h-9z" fill="url(#paper)" stroke="#5d87ad"/></svg>
      <svg viewBox="0 0 20 20"><path d="M8 6h11v12H8z" fill="url(#paper)" stroke="#5d87ad"/><path d="M2 2h13v11H2z" fill="#4e7dae" stroke="#28588c"/></svg>
      <svg viewBox="0 0 20 20"><path d="M2 2h13v11H2z" fill="#4e7dae" stroke="#28588c"/><path d="M7 7h12v11H7z" fill="url(#paper)" stroke="#5d87ad"/></svg>
    </div>
  </aside>
</main>

<section class="command">
  <i class="grip tall"></i>
  <div class="cmd-box">
    <div class="history"><span>Command: _.erase 2 found</span><i></i></div>
    <div class="prompt"><span>Command: <b class="caret"></b></span><i class="scroll"><b></b></i><i class="corner"></i></div>
  </div>
</section>

<footer class="status">
  <span class="coords">4'-8.6",&nbsp; 3'-1.1" , 0'-0.0"</span>
  <span class="mode w41">SNAP</span><span class="mode w39">GRID</span><span class="mode on w54">ORTHO</span><span class="mode w50">POLAR</span><span class="mode on w52">OSNAP</span><span class="mode on w60">OTRACK</span><span class="mode on w42">DUCS</span><span class="mode on w34">DYN</span><span class="mode w34">LWT</span><span class="mode on w53">MODEL</span>
  <div class="status-tray">
    <span class="tray-box">
      <svg width="21" height="20" viewBox="0 0 21 20"><path d="M1 1q2 9 12 9L10 2z" fill="#8ba0c8" stroke="#4d618f"/><path d="m5 9-4 9h9M6 5l6-4" stroke="#5a6f9c" stroke-width="2" fill="none"/><path d="m13 7 7 12H6z" fill="#ffe52e" stroke="#8d7a00"/><path d="M13 11v4M13 16v2" stroke="#000" stroke-width="1.800"/></svg>
      <svg width="21" height="20" viewBox="0 0 21 20"><path d="M11 8V4q0-3 4-3t4 3v5" fill="none" stroke="#6b6200" stroke-width="3.400"/><path d="M11 8V4q0-3 4-3t4 3v5" fill="none" stroke="#dfca22" stroke-width="1.800"/><path d="M1 8h13v11H1z" fill="#e8d323" stroke="#3a3500" stroke-width="1.400"/><path d="M3 11h9M3 14h9M3 17h9" stroke="#978600"/></svg>
    </span>
    <svg width="10" height="6" viewBox="0 0 10 6"><path d="M0 0h10L5 6z"/></svg>
    <svg width="20" height="20" viewBox="0 0 20 20"><rect x=".8" y=".8" width="18.400" height="18.400" fill="#b8d2ea" stroke="#2a5a8c" stroke-width="1.600"/><rect x="4" y="4" width="12" height="12" fill="url(#paper)" stroke="#3d74a8"/></svg>
  </div>
</footer>

<footer class="taskbar">
  <svg class="weather" viewBox="0 0 30 30"><circle cx="14.500" cy="14" r="13" fill="url(#moon)"/><path d="M16 23q-3 0-3-3t3-3q2-5 6-4 4 0 4.500 4 3.500 0 3.500 3t-3.500 3z" fill="#e6ebee"/></svg>
  <div class="apps">
    <span><svg viewBox="0 0 30 30"><path d="M0 0h14.300v14.300H0zM15.700 0H30v14.300H15.700zM0 15.700h14.300V30H0zM15.700 15.700H30V30H15.700z" fill="url(#win)"/></svg></span>
    <span><svg viewBox="0 0 30 30"><circle cx="13.500" cy="12.500" r="10.700" fill="#5c4a55" stroke="#dcdce2" stroke-width="2.800"/><path d="m20.500 21 5.500 6.500" stroke="#dcdce2" stroke-width="3.600" stroke-linecap="round"/></svg></span>
    <span><svg viewBox="0 0 30 30"><path d="M0 8h23v20H0z" fill="#5d5b5c"/><path d="M7 0h23v20H7z" fill="#f1f1f1"/><path d="M7 8h16v12H7z" fill="#a9a9a9"/></svg></span>
    <span><svg viewBox="0 0 30 30"><path d="M0 11 15 1l15 10v5H0z" fill="#0a4f9c"/><path d="M3 8h24v12H3z" fill="#f4f4f4"/><path d="M0 11l15 9 15-9v18H0z" fill="url(#mail)"/><path d="M0 29 15 19.500 30 11v18z" fill="#37bdf3" opacity=".5"/></svg><b class="badge">1</b></span>
    <span><svg viewBox="0 0 30 30"><path d="M0 3q0-2 2-2h8l3 4h6v8H0z" fill="#e09c07"/><path d="M0 8h12l3-4h13q2 0 2 2v20q0 2-2 2H2q-2 0-2-2z" fill="url(#folder)"/><path d="M5 28v-5q0-2 2-2h16q2 0 2 2v5z" fill="#0a67b8"/><path d="M9 24.500h12" stroke="#04396d" stroke-width="1.600"/></svg><b class="dot"></b></span>
    <span><svg viewBox="0 0 30 30"><circle cx="15" cy="15" r="15" fill="#fcc31e"/><path d="M15 15 8 18.500 2 7.500A15 15 0 0 1 28 7.500H15z" fill="#e33b2e"/><path d="M2 7.500 8.500 19l6.500 3.500L12.500 29.800A15 15 0 0 1 2 7.500z" fill="#2fa24c"/><circle cx="15" cy="15" r="7.200" fill="#fff"/><circle cx="15" cy="15" r="5.800" fill="#2f7ced"/></svg></span>
    <span><svg viewBox="0 0 30 30"><path d="M8.500 6V2.500Q8.500 1 10 1h10q1.500 0 1.500 1.500V6" fill="none" stroke="#27b1f0" stroke-width="1.800"/><path d="M.5 5h29v20q0 4-4 4h-21q-4 0-4-4z" fill="url(#store)"/><path d="M9.500 11.500h5v5h-5z" fill="#ef5228"/><path d="M15.700 11.500h5v5h-5z" fill="#7db901"/><path d="M9.500 17.500h5v5h-5z" fill="#02a4ee"/><path d="M15.700 17.500h5v5h-5z" fill="#fdb813"/></svg></span>
    <span><svg viewBox="0 0 30 30"><circle cx="15" cy="15" r="14.500" fill="#1ed05e"/><path d="M6 10q10-3 19 2M7 15q9-2.500 16 2M8 20q7-2 13 1.500" fill="none" stroke="#10190f" stroke-width="2.500" stroke-linecap="round"/></svg></span>
    <span><svg viewBox="0 0 30 30"><circle cx="15" cy="15" r="14.300" fill="url(#qb)" stroke="#b9d4f5" stroke-width="1.200"/><text class="qb-text" x="15" y="20" text-anchor="middle">qb</text></svg></span>
    <span><svg viewBox="0 0 30 30"><circle cx="15" cy="15" r="15" fill="#74b843"/><path d="M5 5.500 9 4q1.500 12 5 13 4-.5 2.500-13l4-.5q0 12 3.500 14l4 .5-2 4q-6 1-8.500-3-1 3.500-5 3.500l2 6.500-4 .5Q5 16 5 5.500z" fill="#fff"/></svg></span>
    <span><svg viewBox="0 0 30 30"><circle cx="15" cy="15" r="15" fill="url(#fb)"/><path d="M12.500 30V19H9v-4.500h3.500V11q0-5.500 5.500-5.500 2 0 3 .3V10h-2q-2 0-2 2v2.500h4L20.500 19H17v11z" fill="#fff"/></svg></span>
    <span><svg viewBox="0 0 30 30"><path d="M15 0C6 0 0 6.500 0 14.500Q0 21 5 25v5l5-2.500q2 .6 5 .6c9 0 15-6 15-13.600S24 0 15 0z" fill="url(#msg)"/><path d="m6 19 7-7.500 4 3.500 7-4-7 7.500-4-3.500z" fill="#fff" stroke="#fff"/></svg></span>
    <span><svg viewBox="0 0 30 30"><path d="M0 0h30v30H0z" fill="#fff"/><rect x=".5" y=".5" width="29" height="29" rx="4" fill="url(#insta)"/><rect x="5" y="5" width="20" height="20" rx="6" fill="none" stroke="#fff" stroke-width="2.500"/><circle cx="15" cy="15" r="5" fill="none" stroke="#fff" stroke-width="2.500"/><circle cx="21" cy="9" r="1.300" fill="#fff"/></svg></span>
    <span><svg viewBox="0 0 30 30"><path d="M0 30 2 22A14.500 14.500 0 1 1 8 28z" fill="#fff"/><path d="m3 27 1.500-6A12.300 12.300 0 1 1 9 25.300z" fill="#3fc351"/><path d="M10 8q2-1 3 3l-1 2q2 4 5 5l2-2q4 1 3 3-2 4-7 2-7-3-7-10 0-2 2-3z" fill="#fff"/></svg><b class="badge">6</b></span>
    <span><svg viewBox="0 0 30 30"><circle cx="15" cy="15" r="15" fill="#5764ee"/><path d="M9 9q3-1.500 4-1.500l.8 1.500h2.400l.8-1.500q1 0 4 1.500 3.500 5 3.300 10-2 2-4.500 2.200L18.500 19h-7l-1.300 2.200Q7.700 21 5.700 19 5.500 14 9 9z" fill="#fff"/><circle cx="11.500" cy="15" r="1.800" fill="#5764ee"/><circle cx="18.500" cy="15" r="1.800" fill="#5764ee"/></svg></span>
    <span><svg viewBox="0 0 30 30"><circle cx="16" cy="6" r="4.700" fill="#7b83eb"/><circle cx="25" cy="7.500" r="3.300" fill="#5059c9"/><path d="M21 12h8.500v8q0 4-4 5l-4.500-1z" fill="#5059c9"/><path d="M9 12h14v10q0 6-7 6t-7-6z" fill="#7b83eb"/><rect x="1" y="7" width="15" height="15.500" rx="1.500" fill="#4a52bd"/><path d="M5 11h7M8.500 11v8" stroke="#fff" stroke-width="1.900"/></svg></span>
    <span><svg viewBox="0 0 30 30"><path d="M2 1 14.500 0v14L3 15z" fill="#de2f20"/><path d="M16.500 1 28 2v11l-11.500 1z" fill="#45b82b"/><path d="m3 17 11.500-1v12L4 30z" fill="#c3bd22"/><path d="m16.500 16 11.500-1v11l-11.500 3z" fill="#5418b4"/></svg></span>
    <span><svg viewBox="0 0 30 30"><path d="M2 2h19l3 26-22 1z" fill="#f3f3ef"/><path d="m2 14 20-4 2 17-21 1z" fill="#73cf2a"/><path d="M5 2v2M9 2v2M13 2v2M17 2v2" stroke="#555"/><path d="M6 15q6-6 10 0-5 8-10 0M12 9q6-1 4 5M7 23q7 4 11-3" fill="none" stroke="#1a4315" stroke-width="1.300"/><path d="M28 2 19 21" stroke="#e69b28" stroke-width="2.400"/></svg></span>
    <span><svg viewBox="0 0 30 30"><path d="M22 0v8L4 22.500 0 19z" fill="#1077b8"/><path d="M22 30v-8L4 7.500 0 11z" fill="#1b93d8"/><path d="m21 0 9 4v22l-9 4z" fill="#2aaaf2"/></svg></span>
    <span><svg viewBox="0 0 30 30"><path d="M1 1h28v28H1z" fill="#c4c4c4" stroke="#080808"/><path d="M29 4v26H4" fill="none" stroke="#666" stroke-width="2"/><path d="M6 6h10v10H6z" fill="#06f3f5" stroke="#000" stroke-width="1.500"/><path d="M4 8h13M4 11h13M4 14h13" stroke="#000" stroke-width="1.300" stroke-dasharray="2 9"/><path d="M8 4v13M11 4v13M14 4v13" stroke="#000" stroke-width="1.300" stroke-dasharray="2 9"/><path d="M19 5h8M19 9h5V4h3" fill="none" stroke="#f02525" stroke-width="1.500"/><path d="M23 27V17h6" fill="none" stroke="#0810f0" stroke-width="1.800"/><path d="m12 14 8 6-3 1 2 5-3 1-2-5-2 3z"/><path d="M1 22h8M1 25h8" stroke="#fff"/></svg></span>
    <span class="current"><svg viewBox="0 0 30 30"><path d="M.5.500h29v29H.5z" fill="url(#teal)" stroke="#e0f5f1"/><path d="M3 26 12 3v18M5 18h8" fill="none" stroke="#d9f5f2" stroke-width="3"/><path d="m12 3 6 23" stroke="#eafffb" stroke-width="3"/><path d="M11 20h19M21 0v30" stroke="#86d5cb"/><path d="M18 17h6v6h-6z" fill="#158e83" stroke="#fff"/></svg><b class="dot wide"></b></span>
    <span><svg viewBox="0 0 30 30"><path d="m5 20-3 9h26l-3-9z" fill="#f58a10"/><path d="M15 1q1 0 1.500 1L23 23q-8 5-16 0l6.500-21q.5-1 1.500-1z" fill="#ef7b0a"/><path d="m12 7-2 6q5 3 10 0l-2-6q-3 2-6 0zM8.700 17.500 7.500 22q7.500 4 15 0l-1.200-4.500q-6 4-12.600 0z" fill="#ececec"/></svg></span>
    <span><svg viewBox="0 0 30 30"><rect x="2" y="2" width="26" height="26" rx="2" fill="url(#photo)"/><circle cx="21" cy="6.500" r="2.700" fill="#f1e3f8"/><path d="M2 25 13 12.500q2-2 4 0l11 12V26q0 2-2 2H4q-2 0-2-2z" fill="#22b5f2"/><path d="m9 28 11-11.500 8 8.500q0 3-3 3z" fill="#0e74cf"/></svg><b class="dot"></b></span>
  </div>
  <div class="tray">
    <svg class="up" viewBox="0 0 16 10"><path d="m2 8 6-6 6 6" fill="none" stroke="#fff" stroke-width="1.800"/></svg>
    <span class="lang">ENG<br>INTL</span>
    <svg class="net" viewBox="0 0 20 20" fill="none" stroke="#fff" stroke-width="1.400"><circle cx="10" cy="10" r="8.800"/><ellipse cx="10" cy="10" rx="4" ry="8.800"/><path d="M1.500 7h17M1.500 13h10"/><circle cx="15" cy="15" r="4.300" fill="#371b13"/><path d="m12 18 6-6"/></svg>
    <svg class="vol" viewBox="0 0 20 20" fill="none" stroke="#fff" stroke-width="1.400"><path d="M1 7.500h3.500L9 3.500v13L4.500 12.500H1z"/><path d="M11.500 7.500q2 2.500 0 5M14 5q4 5 0 10M16.500 3q5.500 7 0 14"/></svg>
    <svg class="bat" viewBox="0 0 21 20"><rect x="1" y="4.500" width="16.500" height="11" rx="2.500" fill="none" stroke="#fff" stroke-width="1.400"/><path d="M3 6.500h5v7H3zM18.500 8q2 0 2 2t-2 2z" fill="#fff"/></svg>
    <span class="clock">4:42 PM<br>10/11/2023</span>
    <svg class="bell" viewBox="0 0 18 20"><path d="M9 1q6 0 6 6v5l2 3v1H1v-1l2-3V7q0-6 6-6zM6.500 17.500h5Q11 19.500 9 19.500t-2.500-2z" fill="#edb9f2"/></svg>
  </div>
</footer>
</body>
</html>
```
FILE: styles.css
```css
* { box-sizing: border-box; }
html, body { margin: 0; width: 1920px; height: 1080px; overflow: hidden; }
body { display: flex; flex-direction: column; background: #f0f0f0; font-family: "Open Sans", sans-serif; color: #000; }
.defs { position: absolute; }
i, em { font-style: normal; }
svg { flex: none; display: block; }

.titlebar { height: 30px; flex: none; display: flex; align-items: center; padding-left: 3px; background: linear-gradient(90deg, #f7edf7, #f9edf1 70%, #f8eeee); border-bottom: 1px solid #ddd8dc; }
.app-icon { width: 18px; height: 18px; margin-right: 7px; }
.title-text { font-size: 14.700px; letter-spacing: -0.190px; white-space: nowrap; }
.window-buttons { margin-left: auto; display: flex; align-self: flex-start; padding-right: 3px; }
.wbtn { width: 58px; height: 27px; display: flex; align-items: center; justify-content: center; }
.wbtn.close { background: #c42b1c; }

.menubar { height: 22px; flex: none; display: flex; align-items: center; gap: 17px; padding-left: 9px; background: #fff; font-size: 14.500px; letter-spacing: -0.150px; line-height: 22px; }
.doc-icon { width: 20px; height: 20px; margin-right: -8px; }
.doc-buttons { margin-left: auto; display: flex; gap: 3px; padding-right: 2px; }
.doc-buttons b { width: 21px; height: 20px; border: 1px solid #eef0f3; display: flex; align-items: center; justify-content: center; }

.toolrow { height: 35px; flex: none; display: flex; align-items: stretch; border-top: 2px solid #fafafa; }
.toolrow.first { margin-top: 1px; }
.toolbar { display: flex; align-items: center; border-right: 1px solid #a0a0a0; border-bottom: 2px solid #a8a8a8; padding: 3px 0 0 5px; }
.tb-standard { width: 817px; }
.tb-styles { width: 500px; padding-left: 6px; }
.tb-workspace { width: 298px; }
.tb-layers { width: 484px; }
.tb-props { width: 738px; padding-left: 6px; }
.grip { flex: none; width: 8px; height: 29px; margin-right: 3px; border: solid #b0b0b0; border-width: 0 1px; background: linear-gradient(90deg, #fff 2px, #f0f0f0 2px 4px, #b0b0b0 4px 5px, #fff 5px); border-left-color: #fff; }
.ic { width: 28.500px; height: 20px; }
.ic.drop { width: 16px; height: 14px; }
.sep { flex: none; width: 8.500px; height: 22px; background: linear-gradient(90deg, transparent 3.500px, #222 3.500px 5px, transparent 5px); }
.sep.thin { height: 23px; }
.combo { flex: none; height: 27px; display: flex; align-items: center; background: #fff; border: 1px solid #9a9a9a; padding: 0 5px 0 10px; font: 14.500px/24px "Liberation Sans", Arial, sans-serif; letter-spacing: -0.400px; color: #222; }
.combo > svg:last-child { width: 12px; height: 12px; margin-left: auto; color: #555; }
.combo.off { border-color: #c8c8c8; padding: 2px 5px 2px 2px; color: #858585; }
.combo.off em { align-self: stretch; width: 100px; background: #f0f0f0; padding-left: 9px; line-height: 21px; }
.combo.off > svg:last-child { color: #b5b5b5; }
.w124 { width: 124px; } .w218 { width: 218px; } .w187 { width: 187px; } .w199 { width: 199px; } .w155 { width: 155px; } .w149 { width: 149px; }
.combo.w124 { margin-left: 1px; }
.combo.w149 em { width: 124px; }
.layer-combo { width: 374px; padding-left: 5px; margin: 0 1px; }
.li { width: 17px; height: 20px; margin-right: 4px; }
.swatch { width: 13px; height: 13px; background: #000; margin-right: 6px; }
.w187 { padding-left: 6px; }
.rule { width: 44px; height: 1.500px; background: #111; margin-right: 6px; }
.rule.long { width: 75px; }
.w199, .w155 { padding-left: 5px; }

.workspace { flex: 1; display: flex; min-height: 0; margin-top: 2px; }
.side { background: #f0f0f0; flex: none; }
.side.left { width: 33px; }
.side.right { width: 35px; padding-left: 2px; }
.toolcol { width: 31px; padding-top: 1px; display: flex; flex-direction: column; align-items: center; border: solid #b4b4b4; border-width: 0 1px 2px 0; height: 543px; }
.toolcol svg { width: 20px; height: 20px; margin-bottom: 7.500px; }
.right .toolcol { height: 489px; border-left: 1px solid #fff; }
.right .toolcol.order { height: 131px; border-top: 1px solid #fff; }
.hgrip { flex: none; width: 25px; height: 8px; margin: 2px 0 6px; border: solid #b4b4b4; border-width: 0 0 1px; background: linear-gradient(#fff 2px, #b4b4b4 2px 3px, #f0f0f0 3px 5px, #fff 5px); }
.viewport { flex: 1; display: flex; flex-direction: column; background: #fff; border: solid #7d7d7d; border-width: 2px 0 0 2px; }
.drawing { width: 1850px; height: 766px; }
.notes { font: bold 23.500px "Liberation Serif", "Times New Roman", serif; }
.solid, .dims, .ucs, .cursor { fill: none; stroke: #111; stroke-width: 1.100; }
.cursor { stroke-width: 1.400; }
.dims .arrow { fill: #000; stroke: none; }
.ucs .hatch { stroke: #777; stroke-width: .8; }
.values { fill: #1c1cff; stroke: #1c1cff; stroke-width: .3; font: 200 25px "DejaVu Sans Light", "DejaVu Sans", sans-serif; }
.values tspan { font-style: italic; }

.tabs { flex: 1; display: flex; background: #f0f0f0; border-top: 1.500px solid #222; font: 14.500px/18px "Liberation Sans", Arial, sans-serif; letter-spacing: -0.400px; color: #222; }
.nav { width: 22.500px; height: 19px; border: solid #b0b0b0; border-width: 0 1px 1px 0; display: flex; align-items: center; justify-content: center; }
.nav svg { width: 14px; height: 11px; }
.tab { position: relative; width: 63px; height: 20px; text-align: center; z-index: 0; padding-right: 5px; }
.tab svg { position: absolute; left: 0; top: -1px; width: 100%; height: 20px; z-index: -1; fill: #f0f0f0; stroke: #111; stroke-width: 1.600; overflow: visible; }
.tab.active { width: 56px; margin-left: 4px; padding-right: 2px; }
.tab.active svg { fill: #fff; }

.command { height: 77px; flex: none; display: flex; margin-top: 1px; padding: 20px 9px 3px 8px; background: linear-gradient(#f0f0f0 1px, #fafafa 1px 5px, #6e6e6e 5px 7px, #f0f0f0 7px); border-bottom: 1px solid #999; }
.grip.tall { height: 52px; width: 10px; margin-right: 3px; margin-top: -3px; }
.cmd-box { flex: 1; display: flex; flex-direction: column; margin-top: -1px; border: solid #777; border-width: 2px 0 0 2px; font: 16.670px/24px "Liberation Mono", "Courier New", monospace; color: #1d1d2c; }
.history { height: 29px; display: flex; background: #fff; border-bottom: 1px solid #aaa; }
.history span, .prompt span { flex: 1; white-space: pre; }
.history i { width: 21px; background: #f0f0f0; border-right: 1px solid #fff; }
.prompt { height: 23px; display: flex; background: #fff; line-height: 27px; }
.prompt span { height: 23px; }
.caret { display: inline-block; width: 2px; height: 20px; background: #000; vertical-align: top; margin-top: 2px; }
.scroll { width: 86px; background: #f0f0f0; border-right: 1px solid #fff; display: flex; align-items: center; justify-content: center; padding-right: 18px; }
.scroll b { width: 21px; height: 4px; background: #868686; }
.corner { width: 22px; background: #f0f0f0; }

.status { height: 29px; flex: none; display: flex; align-items: flex-start; gap: 5px; padding: 5px 5px 0 7px; border-bottom: 1px solid #555; font: 14.500px/22px "Liberation Sans", Arial, sans-serif; letter-spacing: -0.600px; color: #222; white-space: nowrap; }
.coords { width: 198px; height: 22px; padding-left: 1px; border: 1px solid #a8a8a8; border-right-color: #bbb; }
.mode { height: 22px; text-align: center; border: solid #fff; border-width: 1px 1px 2px; border-right-color: #a8a8a8; border-bottom-color: #a8a8a8; line-height: 22px; }
.mode.on { border: solid #222; border-width: 1.500px 0 0 1.500px; line-height: 24px; box-shadow: inset -1px -1px #fff; }
.w41 { width: 41px; } .w39 { width: 39px; } .w54 { width: 54px; } .w50 { width: 50px; } .w52 { width: 52px; } .w60 { width: 60px; } .w42 { width: 42px; } .w34 { width: 35px; } .w53 { width: 53px; }
.status-tray { margin-left: auto; display: flex; align-items: center; gap: 6px; }
.status-tray > svg:nth-child(2) { margin: 8px 4px 0 1px; }
.tray-box { display: flex; gap: 4px; width: 56px; height: 22px; padding: 1px 4px; border: solid #8f8f8f; border-width: 1px 0 0 1px; }

.taskbar { height: 59px; flex: none; display: flex; align-items: center; padding-bottom: 1px; color: #fff; background: linear-gradient(90deg, #2a1b2b 0, #2e1a24 440px, #3b1a12 600px, #2e2414 730px, #2c2415 1140px, #3a1a12 1370px, #391b13 1830px, #2f1a1c); }
.weather { width: 30px; height: 30px; margin-left: 14px; }
.apps { display: grid; grid-template-columns: repeat(23, 55px); height: 100%; margin-left: 259px; }
.apps span { position: relative; display: flex; align-items: center; justify-content: center; }
.apps svg { width: 30px; height: 30px; }
.apps .current { background: #4b3029; border-radius: 5px; margin: 4px 2px 4px; height: 50px; }
.badge { position: absolute; left: 28px; top: 8px; width: 20px; height: 20px; border-radius: 50%; background: #d79ade; color: #111; font: 15px/20px "Open Sans", sans-serif; text-align: center; }
.dot { position: absolute; bottom: 6px; left: 50%; width: 8px; height: 4px; margin-left: -4px; border-radius: 2px; background: #a1938f; }
.dot.wide { width: 20px; margin-left: -10px; bottom: 1px; background: #d79ae4; }
.qb-text { font: 17px "Open Sans", sans-serif; fill: #eef6ff; }
.tray { margin-left: auto; display: flex; align-items: center; padding: 0 25px 1px 0; font: 15px/20px "Open Sans", sans-serif; letter-spacing: -0.200px; }
.up { width: 16px; height: 10px; margin-right: 24px; }
.lang { width: 31px; text-align: center; }
.net, .vol { width: 21px; height: 21px; }
.net { margin-left: 21px; }
.vol { margin-left: 9px; }
.bat { width: 21px; height: 20px; margin-left: 9px; }
.clock { width: 80px; margin-left: 18px; text-align: right; white-space: nowrap; }
.bell { width: 18px; height: 21px; margin-left: 10px; }
```
